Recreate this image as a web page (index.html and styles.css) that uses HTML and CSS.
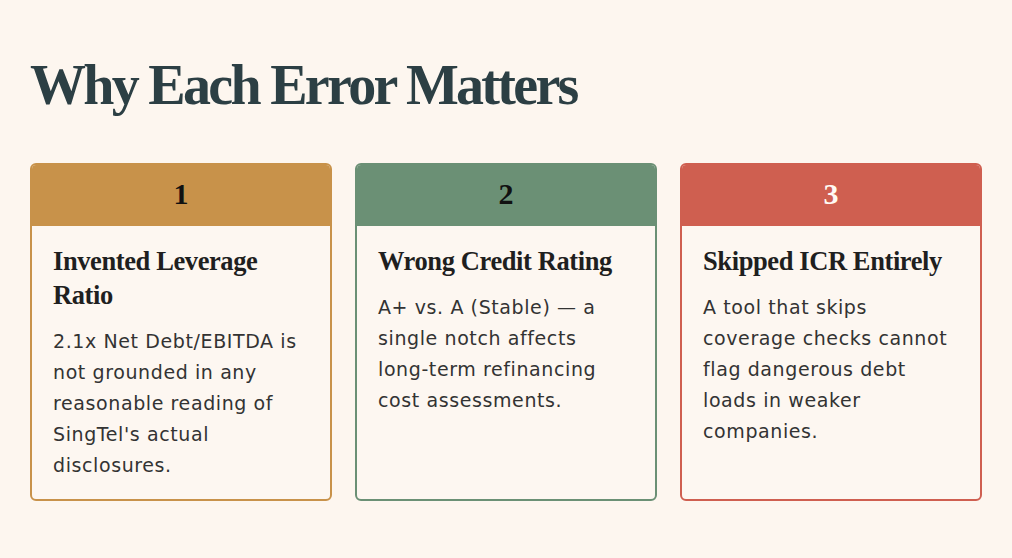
FILE: index.html
```html
<!DOCTYPE html>
<html lang="en">
<head>
<meta charset="utf-8">
<title>Why Each Error Matters</title>
<link rel="stylesheet" href="styles.css">
</head>
<body>
<main class="page">
  <h1 class="title">Why Each Error Matters</h1>
  <section class="cards">
    <article class="card card-gold">
      <div class="card-head"><span class="num">1</span></div>
      <div class="card-body">
        <h2 class="card-title">Invented Leverage Ratio</h2>
        <p class="card-text">2.1x Net Debt/EBITDA is not grounded in any reasonable reading of SingTel's actual disclosures.</p>
      </div>
    </article>
    <article class="card card-green">
      <div class="card-head"><span class="num">2</span></div>
      <div class="card-body">
        <h2 class="card-title">Wrong Credit Rating</h2>
        <p class="card-text">A+ vs. A (Stable) — a single notch affects long&#8209;term refinancing cost assessments.</p>
      </div>
    </article>
    <article class="card card-red">
      <div class="card-head"><span class="num num-light">3</span></div>
      <div class="card-body">
        <h2 class="card-title">Skipped ICR Entirely</h2>
        <p class="card-text">A tool that skips coverage checks cannot flag dangerous debt loads in weaker companies.</p>
      </div>
    </article>
  </section>
</main>
</body>
</html>
```
FILE: styles.css
```css
html, body {
  margin: 0;
  padding: 0;
  background: #fdf6ef;
}
.page {
  padding: 50px 30px 0 30px;
}
.title {
  margin: 0;
  font-family: "Liberation Serif", "DejaVu Serif", serif;
  font-weight: bold;
  font-size: 56px;
  line-height: 70px;
  letter-spacing: -2.7px;
  color: #2c3f44;
}
.cards {
  margin-top: 43px;
  display: grid;
  grid-template-columns: repeat(3, 302px);
  column-gap: 23px;
}
.card {
  height: 338px;
  box-sizing: border-box;
  border: 2px solid;
  border-radius: 6px;
  overflow: hidden;
  background: #fdf7f1;
  display: flex;
  flex-direction: column;
}
.card-gold { border-color: #c8924a; }
.card-green { border-color: #6b9075; }
.card-red { border-color: #cf5f50; }
.card-head {
  height: 61px;
  box-sizing: border-box;
  padding-bottom: 3px;
  display: flex;
  align-items: center;
  justify-content: center;
}
.card-gold .card-head { background: #c8924a; }
.card-green .card-head { background: #6b9075; }
.card-red .card-head { background: #cf5f50; }
.num {
  font-family: "Liberation Serif", "DejaVu Serif", serif;
  font-weight: bold;
  font-size: 30px;
  color: #111111;
}
.num-light { color: #fffaf4; }
.card-body {
  padding: 18px 21px 0 21px;
}
.card-title {
  margin: 0;
  font-family: "Liberation Serif", "DejaVu Serif", serif;
  font-weight: bold;
  font-size: 26.5px;
  line-height: 34px;
  letter-spacing: -0.4px;
  color: #1f1f1f;
}
.card-text {
  margin: 14px 0 0 0;
  font-family: "DejaVu Sans", "Open Sans", sans-serif;
  font-size: 19px;
  line-height: 31px;
  letter-spacing: 0.6px;
  color: #333333;
}
```
